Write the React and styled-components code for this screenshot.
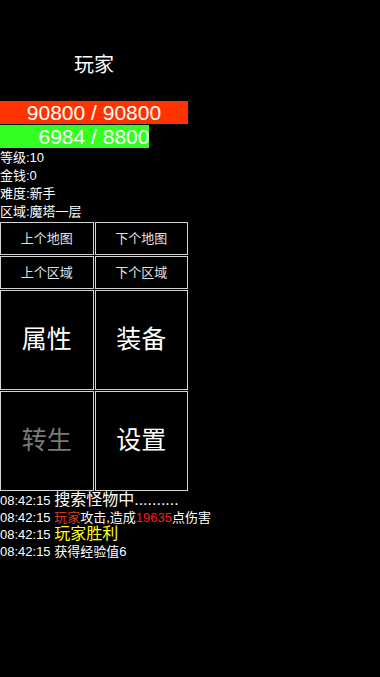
import React from 'react';
import styled, { createGlobalStyle } from 'styled-components';

const GlobalStyle = createGlobalStyle`
  html, body {
    margin: 0;
    padding: 0;
    background: #000;
  }
  body {
    font-family: "Liberation Sans", "Noto Sans CJK SC", sans-serif;
    color: #fff;
  }
`;

const Page = styled.div`
  width: 380px;
  min-height: 677px;
  background: #000;
`;

const Panel = styled.div`
  width: 188px;
  display: flex;
  flex-direction: column;
`;

const Title = styled.div`
  height: 101px;
  display: flex;
  align-items: center;
  justify-content: center;
  padding-top: 26px;
  box-sizing: border-box;
  font-size: 20px;
`;

const Bar = styled.div`
  position: relative;
  height: 23px;
  margin-bottom: 1px;
`;

const Fill = styled.div`
  height: 100%;
  background: ${p => p.$color};
`;

const BarText = styled.div`
  position: absolute;
  inset: 0;
  display: flex;
  align-items: center;
  justify-content: center;
  font-size: 21px;
  color: #fff;
`;

const Info = styled.div`
  font-size: 13px;
  line-height: 18px;
  color: #fff;
`;

const SmallGrid = styled.div`
  display: grid;
  grid-template-columns: 1fr 1fr;
  gap: 1px;
  margin-top: 1px;
`;

const SmallButton = styled.div`
  height: 33px;
  box-sizing: border-box;
  border: 1px solid #d4d4d4;
  padding-bottom: 3px;
  display: flex;
  align-items: center;
  justify-content: center;
  font-size: 13px;
  color: #e0e0e0;
`;

const BigGrid = styled.div`
  display: grid;
  grid-template-columns: 1fr 1fr;
  gap: 1px;
  margin-top: 1px;
`;

const BigButton = styled.div`
  height: 100px;
  box-sizing: border-box;
  border: 1px solid #d4d4d4;
  padding-bottom: 6px;
  display: flex;
  align-items: center;
  justify-content: center;
  font-size: 25px;
  color: ${p => (p.$disabled ? '#7a7a7a' : '#fff')};
`;

const Log = styled.div`
  display: flex;
  flex-direction: column;
  padding-top: 1px;
`;

const LogLine = styled.div`
  height: ${p => p.$h}px;
  line-height: ${p => p.$h}px;
  font-size: 13px;
  color: #fff;
  white-space: nowrap;
`;

const Msg = styled.span`
  font-size: ${p => (p.$big ? '16px' : '13px')};
  line-height: 1;
  color: ${p => p.$color || '#fff'};
`;

export default function App() {
  const hp = 90800;
  const hpMax = 90800;
  const mp = 6984;
  const mpMax = 8800;

  return (
    <Page>
      <GlobalStyle />
      <Panel>
        <Title>玩家</Title>
        <Bar>
          <Fill $color="#ff3300" style={{ width: `${(hp / hpMax) * 100}%` }} />
          <BarText>{hp} / {hpMax}</BarText>
        </Bar>
        <Bar>
          <Fill $color="#33ff22" style={{ width: `${(mp / mpMax) * 100}%` }} />
          <BarText>{mp} / {mpMax}</BarText>
        </Bar>
        <Info>等级:10</Info>
        <Info>金钱:0</Info>
        <Info>难度:新手</Info>
        <Info>区域:魔塔一层</Info>

        <SmallGrid>
          <SmallButton>上个地图</SmallButton>
          <SmallButton>下个地图</SmallButton>
          <SmallButton>上个区域</SmallButton>
          <SmallButton>下个区域</SmallButton>
        </SmallGrid>

        <BigGrid>
          <BigButton>属性</BigButton>
          <BigButton>装备</BigButton>
          <BigButton $disabled>转生</BigButton>
          <BigButton>设置</BigButton>
        </BigGrid>
      </Panel>

      <Log>
        <LogLine $h={17}>
          08:42:15 <Msg $big>搜索怪物中..........</Msg>
        </LogLine>
        <LogLine $h={17}>
          08:42:15 <Msg $color="#d23a2a">玩家</Msg>攻击,造成<Msg $color="#ff1a1a">19635</Msg>点伤害
        </LogLine>
        <LogLine $h={18}>
          08:42:15 <Msg $big $color="#ffff1a">玩家胜利</Msg>
        </LogLine>
        <LogLine $h={16}>08:42:15 获得经验值6</LogLine>
      </Log>
    </Page>
  );
}
